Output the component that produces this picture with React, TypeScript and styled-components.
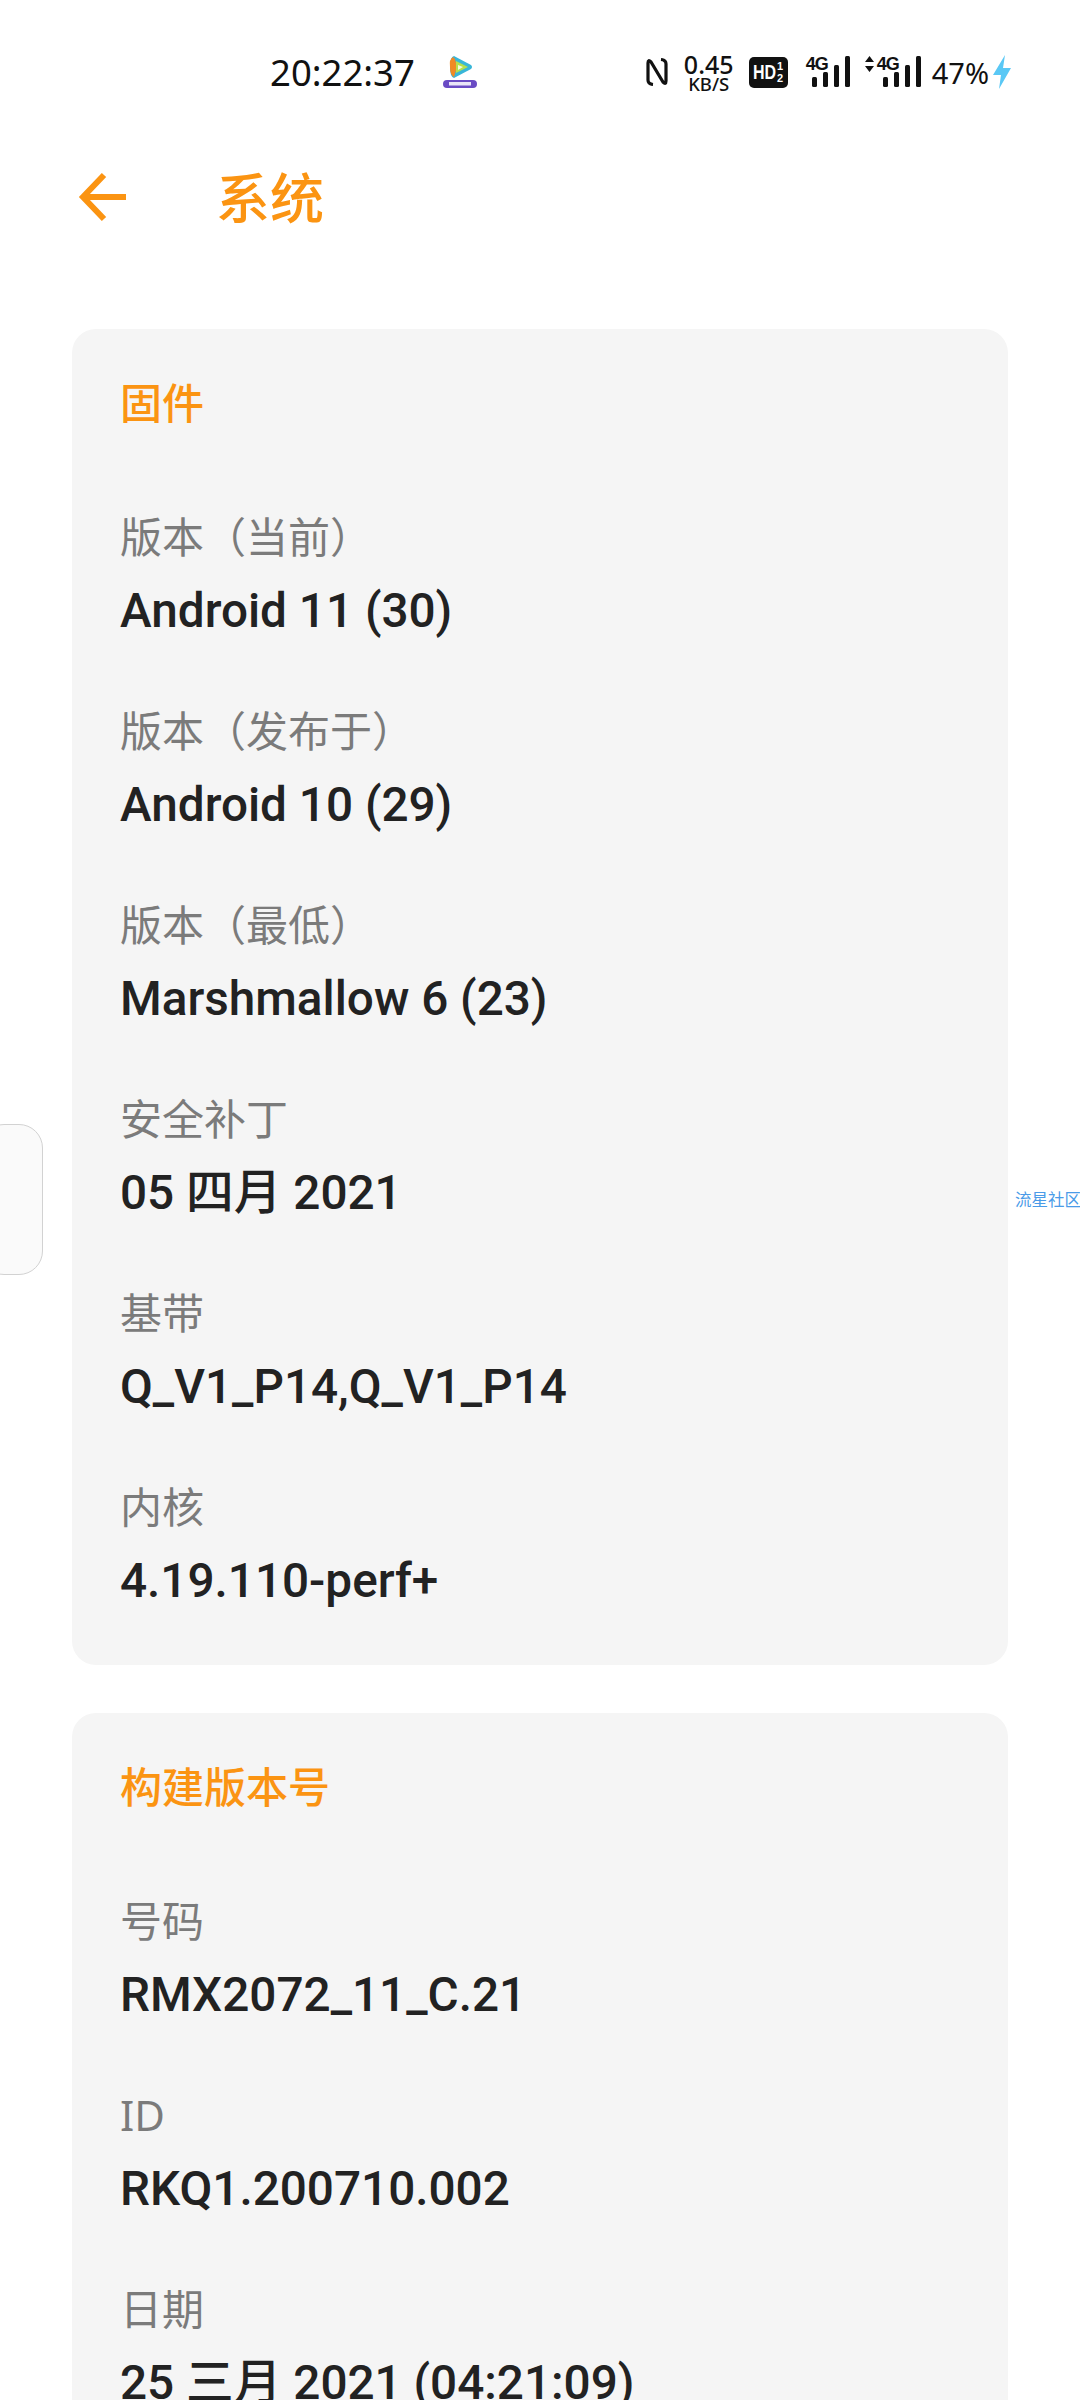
import React from "react";
import styled, { createGlobalStyle } from "styled-components";

const GlobalStyle = createGlobalStyle`
  html, body {
    margin: 0;
    padding: 0;
    background: #fff;
  }
  body {
    font-family: Roboto, "Noto Sans CJK SC", sans-serif;
  }
`;
const Screen = styled.div`
  position: relative;
  width: 1080px;
  height: 2400px;
  overflow: hidden;
  background: #fff;
`;
const StatusBar = styled.div`
  height: 72px;
  padding-top: 36px;
  display: flex;
  align-items: center;
  color: #111;
`;
const Clock = styled.span`
  margin-left: 270px;
  width: 146px;
  font-size: 36.5px;
  font-family: "Noto Sans", sans-serif;
  line-height: 72px;
`;
const AppBadge = styled.svg`
  margin-left: 26px;
  width: 36px;
  height: 34px;
`;
const StatusRight = styled.div`
  margin-left: auto;
  margin-right: 69px;
  display: flex;
  align-items: center;
`;
const NetSpeed = styled.div`
  width: 52px;
  margin: 0 14px 0 15px;
  display: flex;
  flex-direction: column;
  align-items: center;
  font-family: "Noto Sans", sans-serif;
`;
const SpeedValue = styled.span`
  font-size: 25px;
  line-height: 23px;
  font-weight: 500;
  white-space: nowrap;
`;
const SpeedUnit = styled.span`
  font-size: 18.5px;
  line-height: 16px;
  font-weight: 500;
  white-space: nowrap;
`;
const HdBadge = styled.span`
  width: 39px;
  height: 31px;
  margin-right: 18px;
  border-radius: 5px;
  background: #111;
  color: #fff;
  display: flex;
  align-items: center;
  justify-content: center;
  gap: 1px;
  font-family: "Liberation Sans", sans-serif;
  font-size: 20px;
  font-weight: 700;
`;
const HdText = styled.span`
  transform: scaleX(0.8);
  margin: 0 -3px;
`;
const HdFraction = styled.span`
  display: flex;
  flex-direction: column;
  font-size: 11px;
  line-height: 12px;
`;
const Signal = styled.div<{ $wide?: boolean }>`
  position: relative;
  width: ${p => (p.$wide ? "56px" : "44px")};
  height: 32px;
  margin-right: ${p => (p.$wide ? "11px" : "15px")};
`;
const SignalLabel = styled.span<{ $left: number }>`
  position: absolute;
  top: -1px;
  left: ${p => p.$left}px;
  font-family: "Liberation Sans", sans-serif;
  font-size: 18px;
  line-height: 18px;
  font-weight: 700;
  letter-spacing: -1px;
`;
const Arrows = styled.svg`
  position: absolute;
  left: 0;
  top: 0;
  width: 9px;
  height: 16px;
`;
const Bars = styled.svg`
  position: absolute;
  right: 0;
  top: 0;
  width: 38px;
  height: 32px;
`;
const Battery = styled.span`
  font-size: 29px;
  font-family: "Noto Sans", sans-serif;
  margin-right: 4px;
`;
const Header = styled.header`
  height: 178px;
  padding: 0 0 0 78px;
  display: flex;
  align-items: center;
  color: #fb9412;
`;
const BackIcon = styled.svg`
  width: 50px;
  height: 50px;
`;
const Title = styled.h1`
  margin: -2px 0 0 88px;
  font-size: 54px;
  line-height: 60px;
  font-weight: 500;
  color: #fb9412;
  font-family: "Noto Sans CJK SC", sans-serif;
`;
const Content = styled.main`
  padding: 0 72px;
  margin-top: 43px;
  display: flex;
  flex-direction: column;
  gap: 48px;
`;
const Card = styled.section`
  background: #f5f5f5;
  border-radius: 24px;
  padding: 42px 48px 54px;
`;
const CardTitle = styled.h2`
  margin: 0 0 76px;
  font-size: 42px;
  line-height: 60px;
  font-weight: 500;
  color: #fb9412;
  font-family: "Noto Sans CJK SC", sans-serif;
`;
const FieldList = styled.div`
  display: flex;
  flex-direction: column;
  gap: 60px;
`;
const Field = styled.div`
  display: flex;
  flex-direction: column;
  gap: 14px;
`;
const FieldLabel = styled.span`
  font-size: 42px;
  line-height: 60px;
  color: #7b7b7b;
  font-family: "Noto Sans", "Noto Sans CJK SC", sans-serif;
`;
const FieldValue = styled.span`
  font-size: 47.7px;
  line-height: 60px;
  font-weight: 500;
  color: #222;
  font-family: Roboto, "Noto Sans CJK SC", sans-serif;
`;
const SideHandle = styled.div`
  position: absolute;
  left: -20px;
  top: 1124px;
  width: 63px;
  height: 151px;
  box-sizing: border-box;
  border: 1px solid #d2d2d2;
  border-radius: 24px;
  background: #fafafa;
`;
const Watermark = styled.span`
  position: absolute;
  left: 1015px;
  top: 1188px;
  font-size: 16.5px;
  line-height: 22px;
  color: #4a9be8;
  font-family: "Noto Sans CJK SC", sans-serif;
  white-space: nowrap;
`;

const sections = [
  {
    title: "固件",
    fields: [
      ["版本（当前）", "Android 11 (30)"],
      ["版本（发布于）", "Android 10 (29)"],
      ["版本（最低）", "Marshmallow 6 (23)"],
      ["安全补丁", "05 四月 2021"],
      ["基带", "Q_V1_P14,Q_V1_P14"],
      ["内核", "4.19.110-perf+"]
    ]
  },
  {
    title: "构建版本号",
    fields: [
      ["号码", "RMX2072_11_C.21"],
      ["ID", "RKQ1.200710.002"],
      ["日期", "25 三月 2021 (04:21:09)"]
    ]
  }
];

const SignalBars = () => (
  <Bars viewBox="0 0 38 32">
    <rect x="0" y="21" width="5" height="10" rx="1.5" fill="#111" />
    <rect x="11" y="16" width="5" height="15" rx="1.5" fill="#111" />
    <rect x="22" y="9" width="5" height="22" rx="1.5" fill="#111" />
    <rect x="33" y="0" width="5" height="31" rx="1.5" fill="#111" />
  </Bars>
);

const App: React.FC = () => (
  <Screen>
    <GlobalStyle />
    <StatusBar>
      <Clock>20:22:37</Clock>
      <AppBadge viewBox="0 0 36 34">
        <path d="M12 1 Q8 2 8 12 Q8 22 12 23 L29 14 Q31 12 29 10Z" fill="#38b6d8" />
        <path d="M11 2 Q7 4 8 12 Q8 20 12 22 L15 12 L13 4Z" fill="#f08a24" />
        <path d="M14 6 L26 12 L14 18Z" fill="#b5e04c" />
        <path d="M16 10 L21 12 L16 15Z" fill="#f4fbe0" />
        <rect x="1" y="25" width="34" height="8" rx="4" fill="#6a4bc4" />
        <rect x="7" y="27" width="22" height="3.5" fill="#e9e4f7" />
      </AppBadge>
      <StatusRight>
        <svg width="22" height="28" viewBox="0 0 22 28" fill="none" stroke="#111" strokeWidth="3.2">
          <path d="M7 26.5 Q2 26 2 22 V5 Q2 1 5 4 L17 24 Q20 27 20 23 V6 Q20 2 15 1.5" />
        </svg>
        <NetSpeed>
          <SpeedValue>0.45</SpeedValue>
          <SpeedUnit>KB/S</SpeedUnit>
        </NetSpeed>
        <HdBadge>
          <HdText>HD</HdText>
          <HdFraction>
            <span>1</span>
            <span>2</span>
          </HdFraction>
        </HdBadge>
        <Signal>
          <SignalLabel $left={0}>4G</SignalLabel>
          <SignalBars />
        </Signal>
        <Signal $wide>
          <Arrows viewBox="0 0 9 16">
            <path d="M4.5 0 L9 6 H0Z M4.5 16 L9 10 H0Z" fill="#111" />
          </Arrows>
          <SignalLabel $left={12}>4G</SignalLabel>
          <SignalBars />
        </Signal>
        <Battery>47%</Battery>
        <svg width="18" height="34" viewBox="0 0 18 34">
          <path d="M12 0 L0 20 H8 L6 34 L18 13 H10Z" fill="#5ac8f5" />
        </svg>
      </StatusRight>
    </StatusBar>
    <Header>
      <BackIcon viewBox="0 0 50 50" fill="none" stroke="#fb9412" strokeWidth="6">
        <path d="M48 25 H5 M26 3 L5 25 L26 47" />
      </BackIcon>
      <Title>系统</Title>
    </Header>
    <Content>
      {sections.map(section => (
        <Card key={section.title}>
          <CardTitle>{section.title}</CardTitle>
          <FieldList>
            {section.fields.map(([label, value]) => (
              <Field key={label}>
                <FieldLabel>{label}</FieldLabel>
                <FieldValue>{value}</FieldValue>
              </Field>
            ))}
          </FieldList>
        </Card>
      ))}
    </Content>
    <SideHandle />
    <Watermark>流星社区</Watermark>
  </Screen>
);

export default App;
